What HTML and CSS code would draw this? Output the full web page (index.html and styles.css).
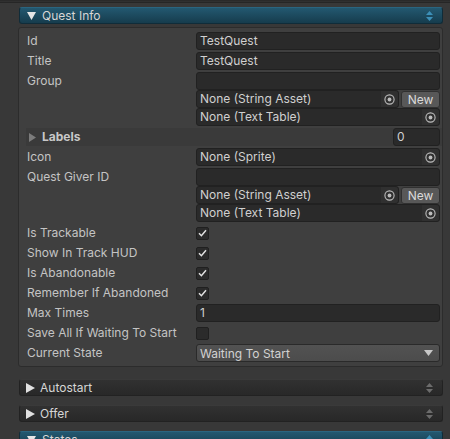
FILE: index.html
```html
<!DOCTYPE html>
<html>
<head>
<meta charset="utf-8">
<link rel="stylesheet" href="styles.css">
</head>
<body>
<div class="topbar"></div>

<div class="sec-header teal">
  <svg class="tri" width="9" height="8" viewBox="0 0 9 8"><path d="M0 0 H9 L4.5 8 Z" fill="#e6e6e6"/></svg>
  <span class="sec-title">Quest Info</span>
  <svg class="updown" width="7" height="10" viewBox="0 0 7 10"><path d="M3.5 0 L7 4 H0 Z M0 6 H7 L3.5 10 Z" fill="#3d90b8"/></svg>
</div>

<div class="panel">
  <div class="row"><div class="label">Id</div><div class="value"><div class="field">TestQuest</div></div></div>
  <div class="row"><div class="label">Title</div><div class="value"><div class="field">TestQuest</div></div></div>
  <div class="row multi">
    <div class="label">Group</div>
    <div class="value stack">
      <div class="field"></div>
      <div class="objrow">
        <div class="field obj"><span>None (String Asset)</span><span class="picker"><svg width="11" height="11" viewBox="0 0 11 11"><circle cx="5.5" cy="5.5" r="4.6" fill="none" stroke="#bdbdbd" stroke-width="1.1"/><circle cx="5.5" cy="5.5" r="1.9" fill="#bdbdbd"/></svg></span></div>
        <div class="btn">New</div>
      </div>
      <div class="field obj"><span>None (Text Table)</span><span class="picker"><svg width="11" height="11" viewBox="0 0 11 11"><circle cx="5.5" cy="5.5" r="4.6" fill="none" stroke="#bdbdbd" stroke-width="1.1"/><circle cx="5.5" cy="5.5" r="1.9" fill="#bdbdbd"/></svg></span></div>
    </div>
  </div>
  <div class="row labels">
    <div class="label bold"><svg class="ltri" width="7" height="9" viewBox="0 0 7 9"><path d="M0 0 L7 4.5 L0 9 Z" fill="#7c7c7c"/></svg>Labels</div>
    <div class="value right"><div class="field num">0</div></div>
  </div>
  <div class="row"><div class="label">Icon</div><div class="value"><div class="field obj"><span>None (Sprite)</span><span class="picker"><svg width="11" height="11" viewBox="0 0 11 11"><circle cx="5.5" cy="5.5" r="4.6" fill="none" stroke="#bdbdbd" stroke-width="1.1"/><circle cx="5.5" cy="5.5" r="1.9" fill="#bdbdbd"/></svg></span></div></div></div>
  <div class="row multi">
    <div class="label">Quest Giver ID</div>
    <div class="value stack">
      <div class="field"></div>
      <div class="objrow">
        <div class="field obj"><span>None (String Asset)</span><span class="picker"><svg width="11" height="11" viewBox="0 0 11 11"><circle cx="5.5" cy="5.5" r="4.6" fill="none" stroke="#bdbdbd" stroke-width="1.1"/><circle cx="5.5" cy="5.5" r="1.9" fill="#bdbdbd"/></svg></span></div>
        <div class="btn">New</div>
      </div>
      <div class="field obj"><span>None (Text Table)</span><span class="picker"><svg width="11" height="11" viewBox="0 0 11 11"><circle cx="5.5" cy="5.5" r="4.6" fill="none" stroke="#bdbdbd" stroke-width="1.1"/><circle cx="5.5" cy="5.5" r="1.9" fill="#bdbdbd"/></svg></span></div>
    </div>
  </div>
  <div class="row"><div class="label">Is Trackable</div><div class="value"><div class="check"><svg width="9" height="8" viewBox="0 0 9 8"><path d="M1 4.3 L3.4 6.7 L8 1.3" stroke="#e2e2e2" stroke-width="1.5" fill="none"/></svg></div></div></div>
  <div class="row"><div class="label">Show In Track HUD</div><div class="value"><div class="check"><svg width="9" height="8" viewBox="0 0 9 8"><path d="M1 4.3 L3.4 6.7 L8 1.3" stroke="#e2e2e2" stroke-width="1.5" fill="none"/></svg></div></div></div>
  <div class="row"><div class="label">Is Abandonable</div><div class="value"><div class="check"><svg width="9" height="8" viewBox="0 0 9 8"><path d="M1 4.3 L3.4 6.7 L8 1.3" stroke="#e2e2e2" stroke-width="1.5" fill="none"/></svg></div></div></div>
  <div class="row"><div class="label">Remember If Abandoned</div><div class="value"><div class="check"><svg width="9" height="8" viewBox="0 0 9 8"><path d="M1 4.3 L3.4 6.7 L8 1.3" stroke="#e2e2e2" stroke-width="1.5" fill="none"/></svg></div></div></div>
  <div class="row"><div class="label">Max Times</div><div class="value"><div class="field">1</div></div></div>
  <div class="row"><div class="label">Save All If Waiting To Start</div><div class="value"><div class="check"></div></div></div>
  <div class="row"><div class="label">Current State</div><div class="value"><div class="dropdown"><span>Waiting To Start</span><svg width="9" height="6" viewBox="0 0 9 6"><path d="M0 0 H9 L4.5 6 Z" fill="#c8c8c8"/></svg></div></div></div>
</div>

<div class="sec-header dark first">
  <svg class="tri-r" width="9" height="10" viewBox="0 0 9 10"><path d="M0 0 L9 5 L0 10 Z" fill="#e0e0e0"/></svg>
  <span class="sec-title">Autostart</span>
  <svg class="updown" width="7" height="10" viewBox="0 0 7 10"><path d="M3.5 0 L7 4 H0 Z M0 6 H7 L3.5 10 Z" fill="#6c6c6c"/></svg>
</div>
<div class="sec-header dark">
  <svg class="tri-r" width="9" height="10" viewBox="0 0 9 10"><path d="M0 0 L9 5 L0 10 Z" fill="#e0e0e0"/></svg>
  <span class="sec-title">Offer</span>
  <svg class="updown" width="7" height="10" viewBox="0 0 7 10"><path d="M3.5 0 L7 4 H0 Z M0 6 H7 L3.5 10 Z" fill="#6c6c6c"/></svg>
</div>
<div class="sec-header teal next">
  <svg class="tri" width="9" height="8" viewBox="0 0 9 8"><path d="M0 0 H9 L4.5 8 Z" fill="#e6e6e6"/></svg>
  <span class="sec-title">States</span>
  <svg class="updown" width="7" height="10" viewBox="0 0 7 10"><path d="M3.5 0 L7 4 H0 Z M0 6 H7 L3.5 10 Z" fill="#3d90b8"/></svg>
</div>
</body>
</html>
```

FILE: styles.css
```css
html, body {
  margin: 0;
  padding: 0;
}
body {
  width: 450px;
  height: 439px;
  overflow: hidden;
  background: #383838;
  font-family: Inter, "Noto Sans", "DejaVu Sans", sans-serif;
  font-size: 12px;
  color: #c4c4c4;
}
.topbar {
  height: 1px;
  border-top: 1px solid #2a2a2a;
  border-bottom: 1px solid #262626;
  background: #303030;
}
.sec-header {
  margin-left: 19px;
  width: 424px;
  height: 17px;
  box-sizing: border-box;
  border-radius: 3px;
  display: flex;
  align-items: center;
  padding-left: 7px;
  padding-right: 9px;
}
.sec-header.teal {
  margin-top: 4px;
  background: linear-gradient(#235870, #163c4d);
  border: 1px solid #102c39;
  border-top-color: #2a6580;
}
.sec-header.teal.next {
  margin-top: 9px;
}
.sec-header.dark {
  margin-top: 9px;
  background: linear-gradient(#313131, #282828);
  border: 1px solid #222222;
  border-top-color: #3a3a3a;
}
.sec-header.dark.first {
  margin-top: 12px;
}
.sec-title {
  flex: 1;
  color: #d6d6d6;
  line-height: 15px;
}
.tri {
  margin-right: 6px;
}
.tri-r {
  margin-left: -1px;
  margin-right: 5px;
}
.panel {
  margin-top: 3px;
  margin-left: 18px;
  width: 425px;
  box-sizing: border-box;
  background: #3f3f3f;
  border: 1px solid #2c2c2c;
  border-radius: 3px;
  padding: 4px 2px 4px 7px;
  display: flex;
  flex-direction: column;
  gap: 2px;
}
.row {
  display: flex;
  height: 18px;
}
.row.multi {
  height: auto;
}
.label {
  width: 169px;
  padding-left: 1px;
  line-height: 18px;
  white-space: nowrap;
  display: flex;
  align-items: flex-start;
}
.label.bold {
  font-weight: 700;
  color: #c8c8c8;
  align-items: center;
  padding-left: 3px;
  width: 167px;
}
.ltri {
  margin-right: 6px;
}
.value {
  flex: 1;
  display: flex;
  align-items: center;
}
.value.stack {
  flex-direction: column;
  align-items: stretch;
}
.value.stack > .field {
  flex: none;
}
.value.right {
  justify-content: flex-end;
}
.row.labels {
  background: #3a3a3a;
  margin-right: -2px;
  padding-right: 2px;
}
.field {
  flex: 1;
  height: 18px;
  box-sizing: border-box;
  background: #2a2a2a;
  border: 1px solid #212121;
  border-radius: 3px;
  padding: 0 3px;
  line-height: 16px;
  color: #d0d0d0;
  display: flex;
  align-items: center;
  white-space: nowrap;
}
.field.num {
  flex: none;
  width: 47px;
}
.field.obj {
  justify-content: space-between;
  padding-right: 0;
}
.picker {
  width: 17px;
  height: 16px;
  display: flex;
  align-items: center;
  justify-content: center;
  background: #303030;
  border-radius: 0 3px 3px 0;
}
.picker svg {
  display: block;
}
.objrow {
  display: flex;
  gap: 2px;
}
.btn {
  width: 39px;
  height: 17px;
  margin-top: 1px;
  box-sizing: border-box;
  background: #585858;
  border: 1px solid #303030;
  border-radius: 3px;
  color: #dadada;
  text-align: center;
  line-height: 15px;
}
.check {
  width: 13px;
  height: 13px;
  box-sizing: border-box;
  background: #2b2b2b;
  border: 1px solid #202020;
  border-radius: 2px;
  display: flex;
  align-items: center;
  justify-content: center;
}
.check svg {
  display: block;
}
.dropdown {
  flex: 1;
  height: 18px;
  box-sizing: border-box;
  background: linear-gradient(#525252, #4c4c4c);
  border: 1px solid #2a2a2a;
  border-radius: 3px;
  padding: 0 6px 0 3px;
  display: flex;
  align-items: center;
  justify-content: space-between;
  color: #d2d2d2;
}
```
